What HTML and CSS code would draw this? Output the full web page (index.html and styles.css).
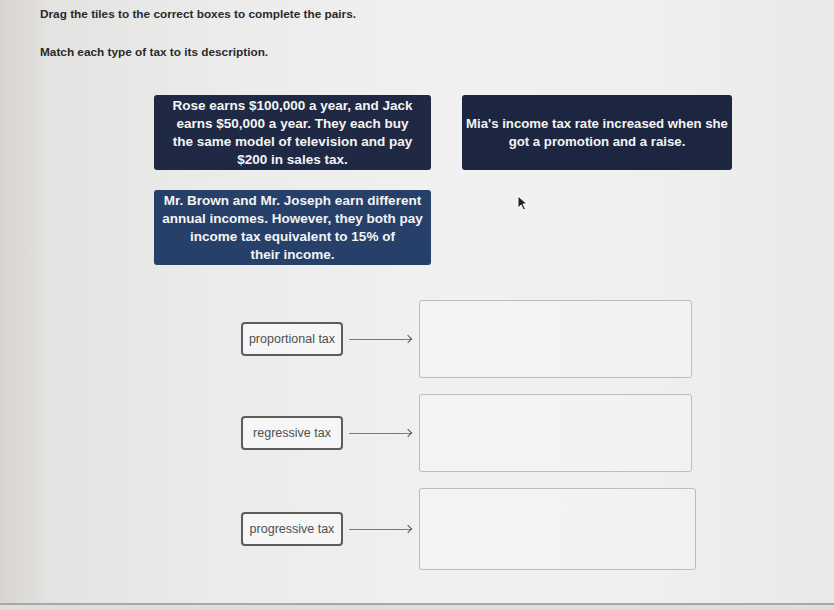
FILE: index.html
```html
<!DOCTYPE html>
<html lang="en">
<head>
  <meta charset="UTF-8">
  <title>Match the tax types</title>
  <link rel="stylesheet" href="styles.css">
</head>
<body>
  <div class="page">
    <p class="prompt">Drag the tiles to the correct boxes to complete the pairs.</p>
    <p class="prompt task">Match each type of tax to its description.</p>

    <div class="tiles">
      <div class="tile">Rose earns $100,000 a year, and Jack<br>earns $50,000 a year. They each buy<br>the same model of television and pay<br>$200 in sales tax.</div>
      <div class="tile tile-right">Mia's income tax rate increased when she<br>got a promotion and a raise.</div>
      <div class="tile tile-blue">Mr. Brown and Mr. Joseph earn different<br>annual incomes. However, they both pay<br>income tax equivalent to 15% of<br>their income.</div>
    </div>

    <div class="pairs">
      <div class="pair">
        <span class="term">proportional tax</span>
        <span class="arrow"></span>
        <div class="drop"></div>
      </div>
      <div class="pair">
        <span class="term">regressive tax</span>
        <span class="arrow"></span>
        <div class="drop"></div>
      </div>
      <div class="pair">
        <span class="term">progressive tax</span>
        <span class="arrow"></span>
        <div class="drop drop-last"></div>
      </div>
    </div>
  </div>

  <svg class="cursor" width="12" height="16" viewBox="0 0 12 16">
    <path d="M1 1 L1 13 L4 10 L6.5 15 L8.5 14 L6 9 L10 9 Z" fill="#222" stroke="#fff" stroke-width="1"/>
  </svg>
</body>
</html>
```

FILE: styles.css
```css
html, body {
  margin: 0;
  height: 100%;
}
body {
  font-family: "Liberation Sans", Arial, sans-serif;
  background:
    linear-gradient(to bottom, rgba(0,0,0,0) 98.8%, #a8a8a8 98.8%, #a8a8a8 99.1%, #dedede 99.1%),
    linear-gradient(to right, #d8d4d1 0%, #e3e3e1 6%, #ebebeb 25%, #f1f1f1 55%, #efefef 80%, #e9e9e9 100%);
  overflow: hidden;
}
.page {
  padding: 7px 0 0 40px;
}
.prompt {
  margin: 0;
  font-size: 11.8px;
  font-weight: bold;
  color: #2a2a2a;
}
.task {
  margin-top: 24px;
}
.tiles {
  display: grid;
  grid-template-columns: 277px 270px;
  column-gap: 31px;
  row-gap: 20px;
  margin: 36px 0 0 114px;
}
.tile {
  height: 75px;
  box-sizing: border-box;
  background: #1f2944;
  border-radius: 3px;
  color: #f4f4f4;
  font-size: 13.5px;
  font-weight: bold;
  line-height: 18px;
  text-align: center;
  white-space: nowrap;
  display: flex;
  align-items: center;
  justify-content: center;
}
.tile-right {
  background: #1d2640;
  font-size: 13.2px;
}
.tile-blue {
  background: #26406a;
}
.pairs {
  margin: 35px 0 0 201px;
  display: flex;
  flex-direction: column;
  gap: 16px;
}
.pair {
  display: flex;
  align-items: center;
}
.term {
  width: 102px;
  height: 34px;
  box-sizing: border-box;
  border: 2px solid #5c5c5c;
  border-radius: 4px;
  background: #f6f6f6;
  color: #4f4f4f;
  font-size: 12.5px;
  display: flex;
  align-items: center;
  justify-content: center;
}
.arrow {
  position: relative;
  width: 62px;
  height: 1px;
  margin: 0 8px 0 6px;
  background: #7a7a7a;
}
.arrow::after {
  content: "";
  position: absolute;
  right: 0;
  top: -3px;
  width: 5px;
  height: 5px;
  border-top: 1.5px solid #555;
  border-right: 1.5px solid #555;
  transform: rotate(45deg);
}
.drop {
  width: 273px;
  height: 78px;
  box-sizing: border-box;
  border: 1px solid #bdbdbd;
  border-radius: 3px;
  background: rgba(255,255,255,0.2);
}
.drop-last {
  width: 277px;
  height: 82px;
}
.cursor {
  position: absolute;
  left: 517px;
  top: 195px;
}
```
